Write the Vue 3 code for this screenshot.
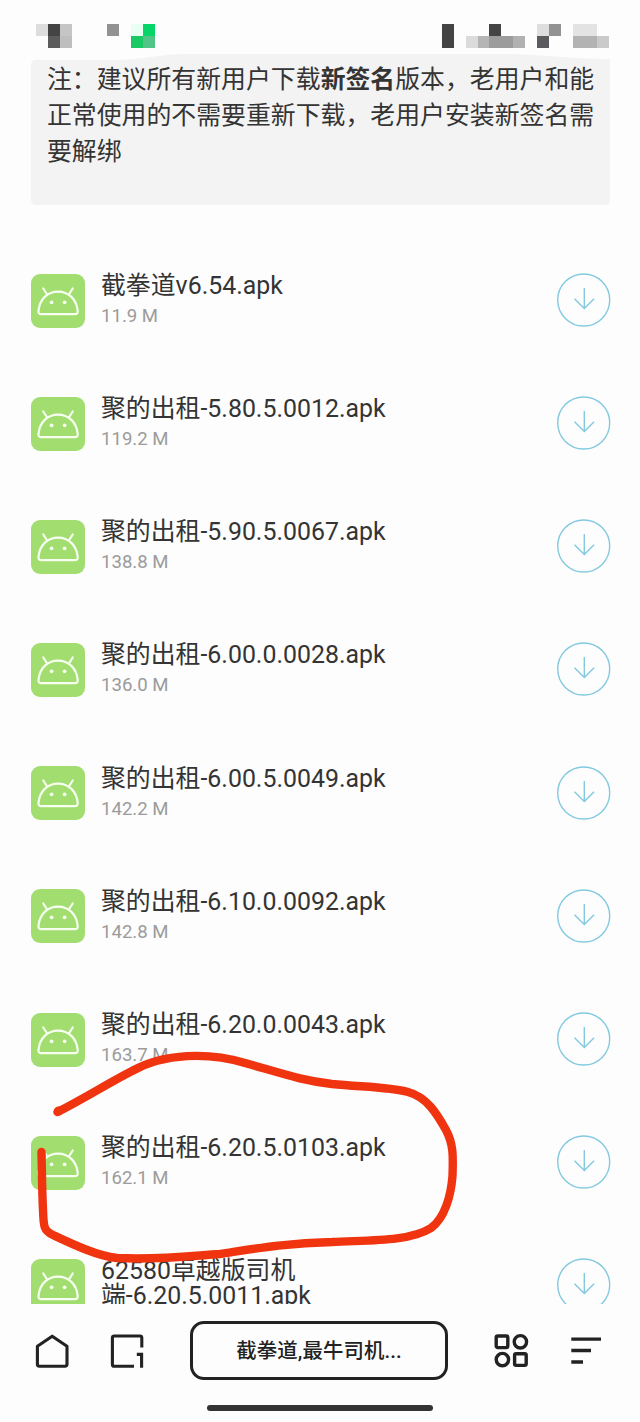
<script setup>
const files = [
  { name: '截拳道v6.54.apk', size: '11.9 M' },
  { name: '聚的出租-5.80.5.0012.apk', size: '119.2 M' },
  { name: '聚的出租-5.90.5.0067.apk', size: '138.8 M' },
  { name: '聚的出租-6.00.0.0028.apk', size: '136.0 M' },
  { name: '聚的出租-6.00.5.0049.apk', size: '142.2 M' },
  { name: '聚的出租-6.10.0.0092.apk', size: '142.8 M' },
  { name: '聚的出租-6.20.0.0043.apk', size: '163.7 M' },
  { name: '聚的出租-6.20.5.0103.apk', size: '162.1 M' },
  { name: '62580卓越版司机端-6.20.5.0011.apk', size: '' },
]

// Pixelated status icons: x, y, width, height, colour
const blocks = [
  [36, 24, 12, 12, '#dddddd'], [48, 24, 12, 12, '#444444'], [60, 24, 12, 12, '#c5c5c5'],
  [48, 36, 12, 12, '#5c5c5c'], [60, 36, 12, 12, '#bebebe'],
  [107, 24, 12, 12, '#929292'],
  [131, 24, 12, 12, '#e8fff3'], [143, 24, 12, 12, '#07d568'],
  [131, 36, 12, 12, '#19c964'], [143, 36, 12, 12, '#52c586'],
  [441.5, 24, 12, 24, '#444444'],
  [489, 24, 12, 12, '#444444'],
  [465.5, 36, 12, 12, '#dbdbdb'], [477.5, 36, 12, 12, '#b5b5b5'],
  [489, 36, 24, 12, '#9c9c9c'], [513, 36, 12, 12, '#b1b1b1'],
  [537, 24, 12, 12, '#dedede'], [549, 24, 12, 12, '#929292'], [537, 36, 12, 12, '#5d5b60'],
  [573, 24, 24, 12, '#e3e3e3'], [573, 36, 24, 12, '#b3b3b3'], [597, 36, 12, 12, '#cacaca'],
]
</script>

<template>
  <div class="screen">
    <svg class="status" viewBox="0 0 640 54" shape-rendering="crispEdges">
      <rect v-for="(b, i) in blocks" :key="i" :x="b[0]" :y="b[1]" :width="b[2]" :height="b[3]" :fill="b[4]" />
    </svg>

    <main class="content">
      <p class="notice">注：建议所有新用户下载<b>新签名</b>版本，老用户和能正常使用的不需要重新下载，老用户安装新签名需要解绑</p>

      <ul class="files">
        <li v-for="file in files" :key="file.name" class="file">
          <svg class="apk" viewBox="0 0 54 54" fill="none" stroke="#f6fff0" stroke-width="2.2" stroke-linecap="round" stroke-linejoin="round">
            <rect width="54" height="54" rx="9" fill="#a2dd70" stroke="none" />
            <path d="M12.3 14.5 L15.8 20 M41.7 14.5 L38.2 20" />
            <path d="M10.4 40.2 Q7.2 40.2 7.5 36.8 C8.6 25.2 16.4 17.6 27 17.6 C37.6 17.6 45.6 25.2 46.7 36.8 Q47 40.2 43.8 40.2 Z" />
            <circle cx="20.6" cy="28.3" r="1.9" fill="#f6fff0" stroke="none" />
            <circle cx="33.6" cy="28.3" r="1.9" fill="#f6fff0" stroke="none" />
          </svg>
          <div class="info">
            <div class="name">{{ file.name }}</div>
            <div class="size">{{ file.size }}</div>
          </div>
          <svg class="download" viewBox="0 0 54 54" fill="none" stroke="#83c9df" stroke-width="1.4">
            <circle cx="26.7" cy="27" r="26" />
            <path d="M27.3 15 V35.2 M17.5 25.8 L27.3 35.6 L37.1 25.8" />
          </svg>
        </li>
      </ul>
    </main>

    <footer class="bottom">
      <nav class="bar">
        <svg class="home" viewBox="0 0 36 36" fill="none" stroke="#222" stroke-width="3.1" stroke-linejoin="round">
          <path d="M3.4 13.2 L18.2 3.2 L33 13.2 V31 Q33 33.2 31 33.2 H5.4 Q3.4 33.2 3.4 31 Z" />
        </svg>
        <svg class="tabs" viewBox="0 0 36 36" fill="none" stroke="#222" stroke-width="3.1">
          <path d="M25 33.2 H5.2 Q3.4 33.2 3.4 31.4 V4.8 Q3.4 3 5.2 3 H31 Q32.8 3 32.8 4.8 V14.6" />
          <path d="M27.8 21.4 H32.6 V34.8" />
        </svg>
        <div class="title">截拳道,最牛司机...</div>
        <svg class="grid" viewBox="0 0 36 36" fill="none" stroke="#222" stroke-width="3.4">
          <rect x="3.2" y="3" width="11.6" height="11.6" rx="1.6" />
          <circle cx="27.4" cy="8.8" r="6.2" />
          <circle cx="9.4" cy="26.6" r="6.2" />
          <rect x="21.6" y="20.8" width="11.6" height="11.6" rx="1.6" />
        </svg>
        <svg class="menu" viewBox="0 0 32 36" stroke="#222" stroke-width="3.3">
          <path d="M1.3 6.2 H31 M1.3 17.5 H21 M1.3 29 H13" />
        </svg>
      </nav>
      <div class="handle"></div>
    </footer>

    <svg class="mark" viewBox="0 0 640 1422" fill="none" stroke="#f03410" stroke-width="8.4" stroke-linecap="round" stroke-linejoin="round">
      <path d="M57.5 1112 C85 1098 105 1085 132 1071 C164 1053 209 1052 245 1063 C284 1074 300 1080 332 1084 C362 1087 390 1087 408 1092 C427 1097 437 1114 446 1130 C454 1145 453 1158 452.5 1176 C451 1195 445 1218 431 1228 C409 1242 367 1240 332 1242 C285 1243 253 1249 220 1254 C190 1256 160 1260 117 1258 C97 1256 70 1243 53 1235 C44 1231 43.5 1227 43 1210 C42 1190 42 1174 41.5 1152" />
      <circle cx="58.5" cy="1111" r="4.6" fill="#f03410" stroke="none" />
    </svg>
  </div>
</template>

<style>
body {
  margin: 0;
  background: #fdfdfd;
}
</style>

<style scoped>
.screen {
  position: relative;
  display: flex;
  flex-direction: column;
  width: 640px;
  height: 1422px;
  overflow: hidden;
  background: #fdfdfd;
  color: #343434;
  font-family: Roboto, "Noto Sans CJK SC", sans-serif;
}
.status {
  display: block;
  flex: none;
  width: 640px;
  height: 54px;
}
.content {
  flex: none;
  height: 1249.5px;
  overflow: hidden;
}
.notice {
  box-sizing: border-box;
  width: 580px;
  height: 151px;
  margin: 0 0 0 31px;
  padding: 8px 14px 0 16px;
  background: #f3f3f3;
  clip-path: path("M0 11 Q0 6 5 6 L86 6 C115 5 125 1 150 0 L480 0 C520 1 540 5 579 5 L579 146 Q579 151 574 151 L5 151 Q0 151 0 146 Z");
  font-size: 24.88px;
  line-height: 36px;
}
.files {
  margin: 69px 0 0;
  padding: 0 29px 0 31px;
  list-style: none;
}
.file {
  display: flex;
  align-items: flex-start;
  height: 123.1px;
}
.apk {
  flex: none;
  width: 54px;
  height: 54px;
}
.info {
  width: 290px;
  margin: -0.8px auto 0 16px;
}
.name {
  width: 285px;
  font-size: 24.88px;
  line-height: 25px;
}
.size {
  margin-top: 6px;
  color: #9b9b9b;
  font-size: 18.6px;
  line-height: 24px;
}
.download {
  flex: none;
  width: 54px;
  height: 54px;
  margin-top: -0.8px;
}
.bottom {
  display: flex;
  flex: 1;
  flex-direction: column;
  align-items: center;
}
.bar {
  display: flex;
  align-items: center;
  align-self: stretch;
  height: 60px;
  margin-top: 17.5px;
  padding: 0 38px 0 34px;
}
.home,
.tabs,
.grid {
  flex: none;
  width: 36px;
  height: 36px;
}
.tabs {
  margin-left: 39px;
}
.title {
  box-sizing: border-box;
  width: 258px;
  height: 59px;
  margin: -1px 0 0 45px;
  border: 3px solid #222;
  border-radius: 14px;
  color: #222;
  font-size: 20.4px;
  font-weight: 500;
  letter-spacing: 0.1px;
  line-height: 55px;
  text-align: center;
}
.grid {
  margin-left: 45px;
}
.menu {
  width: 32px;
  height: 36px;
  margin-left: 41px;
}
.handle {
  width: 226px;
  height: 6px;
  margin-top: 23.5px;
  border-radius: 3px;
  background: #343434;
}
.mark {
  position: absolute;
  top: 0;
  left: 0;
  width: 640px;
  height: 1422px;
  pointer-events: none;
}
</style>
